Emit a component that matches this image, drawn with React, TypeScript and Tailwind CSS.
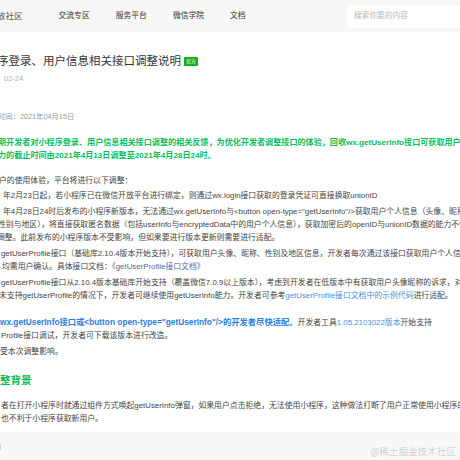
import React from "react";

function L({ children, className = "" }: { children: React.ReactNode; className?: string }) {
  return <div className={"whitespace-nowrap h-[13px] leading-[13px] " + className}>{children}</div>;
}

const G = "text-[#07c160]";
const LINK = "text-[#576b95]";
const LB = "text-[#4a8fdc]";

export default function App() {
  return (
    <div className="relative w-[460px] h-[460px] overflow-hidden bg-white font-['Liberation_Sans','Noto_Sans_CJK_SC',sans-serif] text-[#444]">
      {/* header */}
      <div className="h-[32px] bg-[#f6f6f6] flex items-center">
        <div className="ml-[-3px] text-[8.5px] text-[#555] whitespace-nowrap">放社区</div>
        <div className="ml-[36px] flex gap-[26px] text-[7.8px] text-[#353535] whitespace-nowrap">
          <span>交流专区</span>
          <span>服务平台</span>
          <span>微信学院</span>
          <span>文档</span>
        </div>
        <div className="ml-auto mr-[-6px] w-[119px] h-[23px] bg-white rounded-[2px] flex items-center pl-[7px] text-[7.7px] text-[#b8b8b8] whitespace-nowrap">
          搜索你要的内容
        </div>
      </div>

      <div className="flex flex-col">
        {/* title */}
        <div className="mt-[21px] h-[16px] leading-[16px] flex items-center whitespace-nowrap ml-[-3px]">
          <span className="text-[11.5px] text-[#353535]">序登录、用户信息相关接口调整说明</span>
          <span className="ml-[3px] bg-[#1aad19] text-white text-[5px] leading-[9px] h-[9px] px-[2px] rounded-[1px]">官方</span>
        </div>
        <div className="mt-[4px] h-[12px] leading-[12px] ml-[4px] text-[7.5px] text-[#b2b2b2]">02-24</div>
        <div className="mt-[26px] h-[12px] leading-[12px] ml-[-2px] text-[7.3px] text-[#999]">时间：2021年04月15日</div>

        {/* green notice */}
        <div className={"mt-[13px] font-bold text-[8.1px] " + G}>
          <L className="ml-[-2px]">期开发者对小程序登录、用户信息相关接口调整的相关反馈，为优化开发者调整接口的体验，回收wx.getUserInfo接口可获取用户授权的个人信息能</L>
          <L className="ml-[-2px]">力的截止时间由2021年4月13日调整至2021年4月28日24时。</L>
        </div>

        {/* body */}
        <div className="mt-[12px] text-[7.85px] flex flex-col">
          <L className="ml-[-1px]">户的使用体验，平台将进行以下调整：</L>
          <L className="mt-[2px] ml-[3px]">年2月23日起，若小程序已在微信开放平台进行绑定，则通过wx.login接口获取的登录凭证可直接换取unionID</L>
          <div className="mt-[3px]">
            <L className="ml-[3px]">年4月28日24时后发布的小程序新版本，无法通过wx.getUserInfo与&lt;button open-type="getUserInfo"/&gt;获取用户个人信息（头像、昵称、</L>
            <L className="ml-[-2px]">性别与地区），将直接获取匿名数据（包括userInfo与encryptedData中的用户个人信息），获取加密后的openID与unionID数据的能力不做</L>
            <L className="ml-[-3px]">调整。此前发布的小程序版本不受影响，但如果要进行版本更新则需要进行适配。</L>
          </div>
          <div className="mt-[3px]">
            <L className="ml-[1px]">getUserProfile接口（基础库2.10.4版本开始支持），可获取用户头像、昵称、性别及地区信息，开发者每次通过该接口获取用户个人信息</L>
            <L className="ml-[2px]">
              均需用户确认。具体接口文档：<span className={LINK}>《getUserProfile接口文档》</span>
            </L>
          </div>
          <div className="mt-[3px]">
            <L className="ml-[1px]">getUserProfile接口从2.10.4版本基础库开始支持（覆盖微信7.0.9以上版本），考虑到开发者在低版本中有获取用户头像昵称的诉求，对于</L>
            <L className="ml-[-1px]">
              未支持getUserProfile的情况下，开发者可继续使用getUserInfo能力。开发者可参考<span className={LB}>getUserProfile接口文档中的示例代码</span>进行适配。
            </L>
          </div>

          <div className="mt-[14px]">
            <L className="ml-[0px]">
              <span className="font-bold text-[8.3px] text-[#2b7de0]">wx.getUserInfo接口或&lt;button open-type="getUserInfo"/&gt;的开发者尽快适配。</span>
              开发者工具<span className={LB}>1.05.2103022版本</span>开始支持
            </L>
            <L className="ml-[1px]">Profile接口调试，开发者可下载该版本进行改造。</L>
          </div>
          <L className="mt-[3px] ml-[0px]">受本次调整影响。</L>
        </div>

        <div className={"mt-[14px] h-[16px] leading-[16px] text-[10.5px] font-bold whitespace-nowrap " + G}>整背景</div>

        <div className="mt-[11px] text-[7.85px]">
          <L className="ml-[1px]">者在打开小程序时就通过组件方式唤起getUserInfo弹窗，如果用户点击拒绝，无法使用小程序，这种做法打断了用户正常使用小程序的流程，</L>
          <L className="ml-[1px]">也不利于小程序获取新用户。</L>
        </div>

        <div className="mt-[7px] h-[40px] bg-[#f8f8f8] pt-[12px]">
          <div className="w-[1px] h-[6px] bg-[#d0d0d0]"></div>
        </div>
      </div>

      <div className="absolute right-[4px] bottom-[2px] text-[9.6px] leading-[14px] text-[#c4c4c4] whitespace-nowrap font-['Noto_Sans_CJK_SC',sans-serif] font-light">
        @稀土掘金技术社区
      </div>
    </div>
  );
}
